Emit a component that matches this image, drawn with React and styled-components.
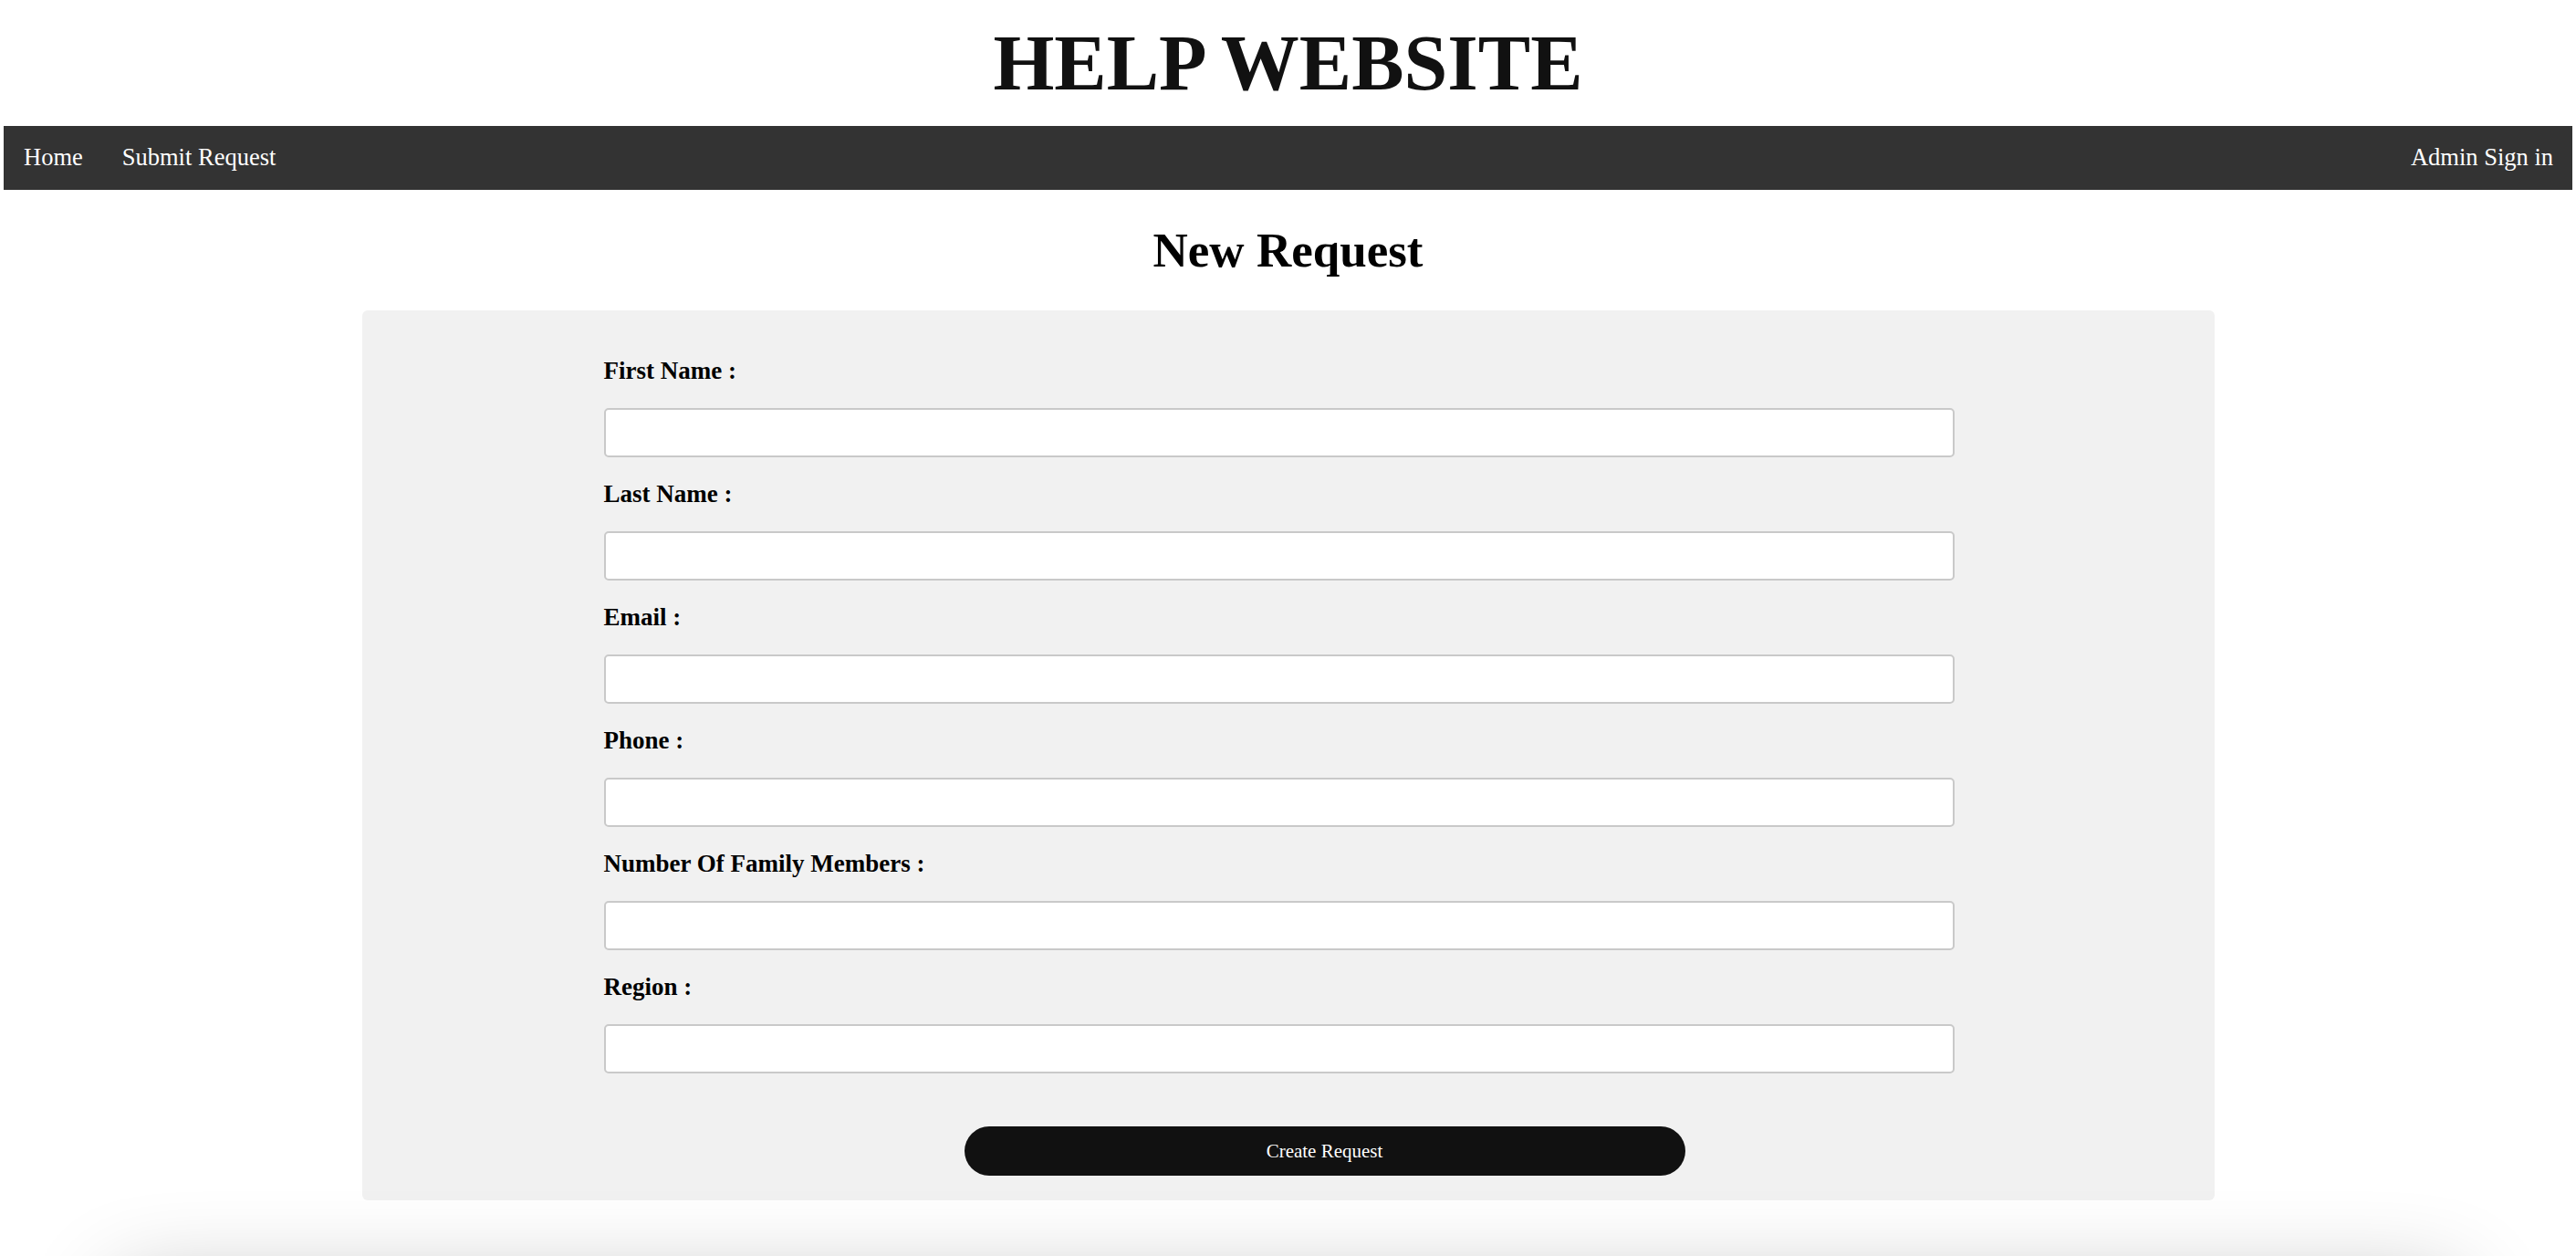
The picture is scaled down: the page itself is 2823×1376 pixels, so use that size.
import { createGlobalStyle, styled } from "styled-components";

const fields = [
  "First Name :",
  "Last Name :",
  "Email :",
  "Phone :",
  "Number Of Family Members :",
  "Region :",
];

function App() {
  return (
    <Page>
      <GlobalStyle />
      <Header>
        <Title>HELP WEBSITE</Title>
      </Header>
      <Nav>
        <NavGroup>
          <NavLink href="#">Home</NavLink>
          <NavLink href="#">Submit Request</NavLink>
        </NavGroup>
        <NavLink href="#">Admin Sign in</NavLink>
      </Nav>
      <Heading>New Request</Heading>
      <FormBox>
        <Form onSubmit={e => e.preventDefault()}>
          {fields.map(label => (
            <Field key={label}>
              <Label>{label}</Label>
              <Input type="text" />
            </Field>
          ))}
          <ButtonRow>
            <SubmitButton type="submit">Create Request</SubmitButton>
          </ButtonRow>
        </Form>
      </FormBox>
      <Footer />
    </Page>
  );
}

const GlobalStyle = createGlobalStyle`
  body {
    margin: 0;
    background: #fff;
    font-family: "Liberation Serif", "Times New Roman", serif;
  }
`;

const Page = styled.div`
  padding: 0 4px;
`;
const Header = styled.header`
  padding: 26px 0;
  text-align: center;
`;
const Title = styled.h1`
  margin: 0;
  font-size: 86px;
  line-height: 86px;
  font-weight: 700;
  color: #111;
`;
const Nav = styled.nav`
  display: flex;
  justify-content: space-between;
  background-color: #333;
`;
const NavGroup = styled.div`
  display: flex;
`;
const NavLink = styled.a`
  display: block;
  padding: 19px 21px 21px 22px;
  font-size: 26.5px;
  line-height: 30px;
  color: #fff;
  text-decoration: none;
`;
const Heading = styled.h2`
  margin: 35px 0;
  text-align: center;
  font-size: 53px;
  line-height: 62px;
  font-weight: 700;
  color: #000;
`;
const FormBox = styled.section`
  width: 2030px;
  margin: 0 auto;
  padding: 51px 0 27px;
  box-sizing: border-box;
  background-color: #f1f1f1;
  border-radius: 6px;
`;
const Form = styled.form`
  width: 1480px;
  margin-left: 265px;
`;
const Field = styled.div`
  display: flex;
  flex-direction: column;
`;
const Label = styled.label`
  margin-bottom: 25px;
  font-size: 27px;
  line-height: 31px;
  font-weight: 700;
  color: #000;
`;
const Input = styled.input`
  height: 54px;
  margin: 0 0 25px;
  box-sizing: border-box;
  border: 2px solid #c9c9c9;
  border-radius: 5px;
  background: #fff;
  font-size: 22px;
  padding: 0 12px;
`;
const ButtonRow = styled.div`
  margin-top: 33px;
  padding-left: 395px;
`;
const SubmitButton = styled.button`
  width: 790px;
  height: 54px;
  border: none;
  border-radius: 27px;
  background-color: #111;
  color: #fff;
  font-family: "Liberation Serif", "Times New Roman", serif;
  font-size: 21px;
  cursor: pointer;
`;
const Footer = styled.footer`
  width: 91%;
  height: 200px;
  margin: 95px auto 0;
  background: #fff;
  box-shadow: 0 0 100px rgba(0, 0, 0, 0.3);
`;

export default App;
